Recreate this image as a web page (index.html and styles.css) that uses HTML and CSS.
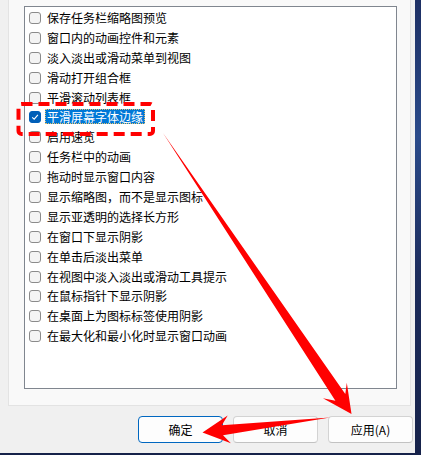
FILE: index.html
```html
<!DOCTYPE html>
<html lang="zh-CN">
<head>
    <meta charset="UTF-8">
    <meta name="viewport" content="width=device-width, initial-scale=1.0">
    <title>视觉效果</title>
    <link rel="stylesheet" href="styles.css">
</head>
<body>

    <div class="window">
        <div class="panel">
            <ul class="effect-list">
                <li class="effect"><span class="box"></span><span class="label">保存任务栏缩略图预览</span></li>
                <li class="effect"><span class="box"></span><span class="label">窗口内的动画控件和元素</span></li>
                <li class="effect"><span class="box"></span><span class="label">淡入淡出或滑动菜单到视图</span></li>
                <li class="effect"><span class="box"></span><span class="label">滑动打开组合框</span></li>
                <li class="effect"><span class="box"></span><span class="label">平滑滚动列表框</span></li>
                <li class="effect checked">
                    <span class="box">
                        <svg viewBox="0 0 12 12" width="12" height="12"><path d="M3.2 6.3 L5.2 8.2 L8.9 3.9" fill="none" stroke="#fff" stroke-width="1.1"/></svg>
                    </span>
                    <span class="label selected">平滑屏幕字体边缘</span>
                </li>
                <li class="effect"><span class="box"></span><span class="label">启用速览</span></li>
                <li class="effect"><span class="box"></span><span class="label">任务栏中的动画</span></li>
                <li class="effect"><span class="box"></span><span class="label">拖动时显示窗口内容</span></li>
                <li class="effect"><span class="box"></span><span class="label">显示缩略图，而不是显示图标</span></li>
                <li class="effect"><span class="box"></span><span class="label">显示亚透明的选择长方形</span></li>
                <li class="effect"><span class="box"></span><span class="label">在窗口下显示阴影</span></li>
                <li class="effect"><span class="box"></span><span class="label">在单击后淡出菜单</span></li>
                <li class="effect"><span class="box"></span><span class="label">在视图中淡入淡出或滑动工具提示</span></li>
                <li class="effect"><span class="box"></span><span class="label">在鼠标指针下显示阴影</span></li>
                <li class="effect"><span class="box"></span><span class="label">在桌面上为图标标签使用阴影</span></li>
                <li class="effect"><span class="box"></span><span class="label">在最大化和最小化时显示窗口动画</span></li>
            </ul>
        </div>

        <div class="actions">
            <button class="btn btn-default">确定</button>
            <button class="btn">取消</button>
            <button class="btn">应用(A)</button>
        </div>
    </div>

    <!-- screenshot markup drawn on top -->
    <svg class="markup" viewBox="0 0 421 455" width="421" height="455">
        <rect x="18.5" y="104" width="134.5" height="30" rx="3" fill="none" stroke="#ff0000" stroke-width="4" stroke-dasharray="11 6"/>
        <polygon points="163,133 345.3,394.1 346.8,382.8 351.5,414 322.9,398.3 335.4,400.7" fill="#ff0000"/>
        <polygon points="330,417.5 221.8,425.2 227.7,415.4 202.5,432.5 230.9,443.2 223,435.2" fill="#ff0000"/>
    </svg>

</body>
</html>
```

FILE: styles.css
```css
body {
    margin: 0;
    position: relative;
    width: 421px;
    height: 455px;
    overflow: hidden;
    background: linear-gradient(180deg, #1d2f63 0%, #2a4a8a 30%, #1c2c5c 60%, #16224a 100%);
    font-family: "Noto Sans CJK SC", "Noto Sans", sans-serif;
    font-size: 12px;
    color: #000;
}

.window {
    width: 415px;
    height: 453px;
    background-color: #f0f0f0;
    display: flex;
    flex-direction: column;
}

.panel {
    box-sizing: border-box;
    width: 403px;
    height: 407px;
    margin: -1px 0 0 8px;
    padding: 6px 0 0 15px;
    background-color: #f9f9f9;
    border: 1px solid #e3e3e3;
}

.effect-list {
    box-sizing: border-box;
    width: 373px;
    height: 383px;
    margin: 0;
    padding: 1px 0 0 0;
    list-style: none;
    background-color: #fff;
    border: 1px solid #80868f;
}

.effect {
    height: 19.9px;
    display: flex;
    align-items: center;
    padding-left: 4px;
}

.box {
    box-sizing: border-box;
    width: 12px;
    height: 12px;
    margin-right: 4px;
    flex-shrink: 0;
    border: 1px solid #8b8b8b;
    border-radius: 3px;
    background-color: #f4f4f4;
    display: flex;
}

.box svg {
    margin: -1px;
}

.checked .box {
    border-color: #005fb8;
    background-color: #005fb8;
}

.label {
    padding: 0 2px;
    line-height: 15px;
    white-space: nowrap;
    position: relative;
    top: -0.5px;
}

.label.selected {
    background-color: #0078d7;
    color: #fff;
    outline: 1px dotted #e6c26a;
    outline-offset: -1px;
}

.actions {
    display: flex;
    justify-content: flex-end;
    gap: 10px;
    margin-top: 10px;
    padding-right: 2px;
}

.btn {
    box-sizing: border-box;
    width: 85px;
    height: 27px;
    padding: 0;
    font-family: inherit;
    font-size: 12px;
    color: #000;
    background-color: #fdfdfd;
    border: 1px solid #d3d3d3;
    border-bottom-color: #c2c2c2;
    border-radius: 4px;
}

.btn-default {
    border: 1px solid #0067c0;
}

.markup {
    position: absolute;
    top: 0;
    left: 0;
    pointer-events: none;
}
```
